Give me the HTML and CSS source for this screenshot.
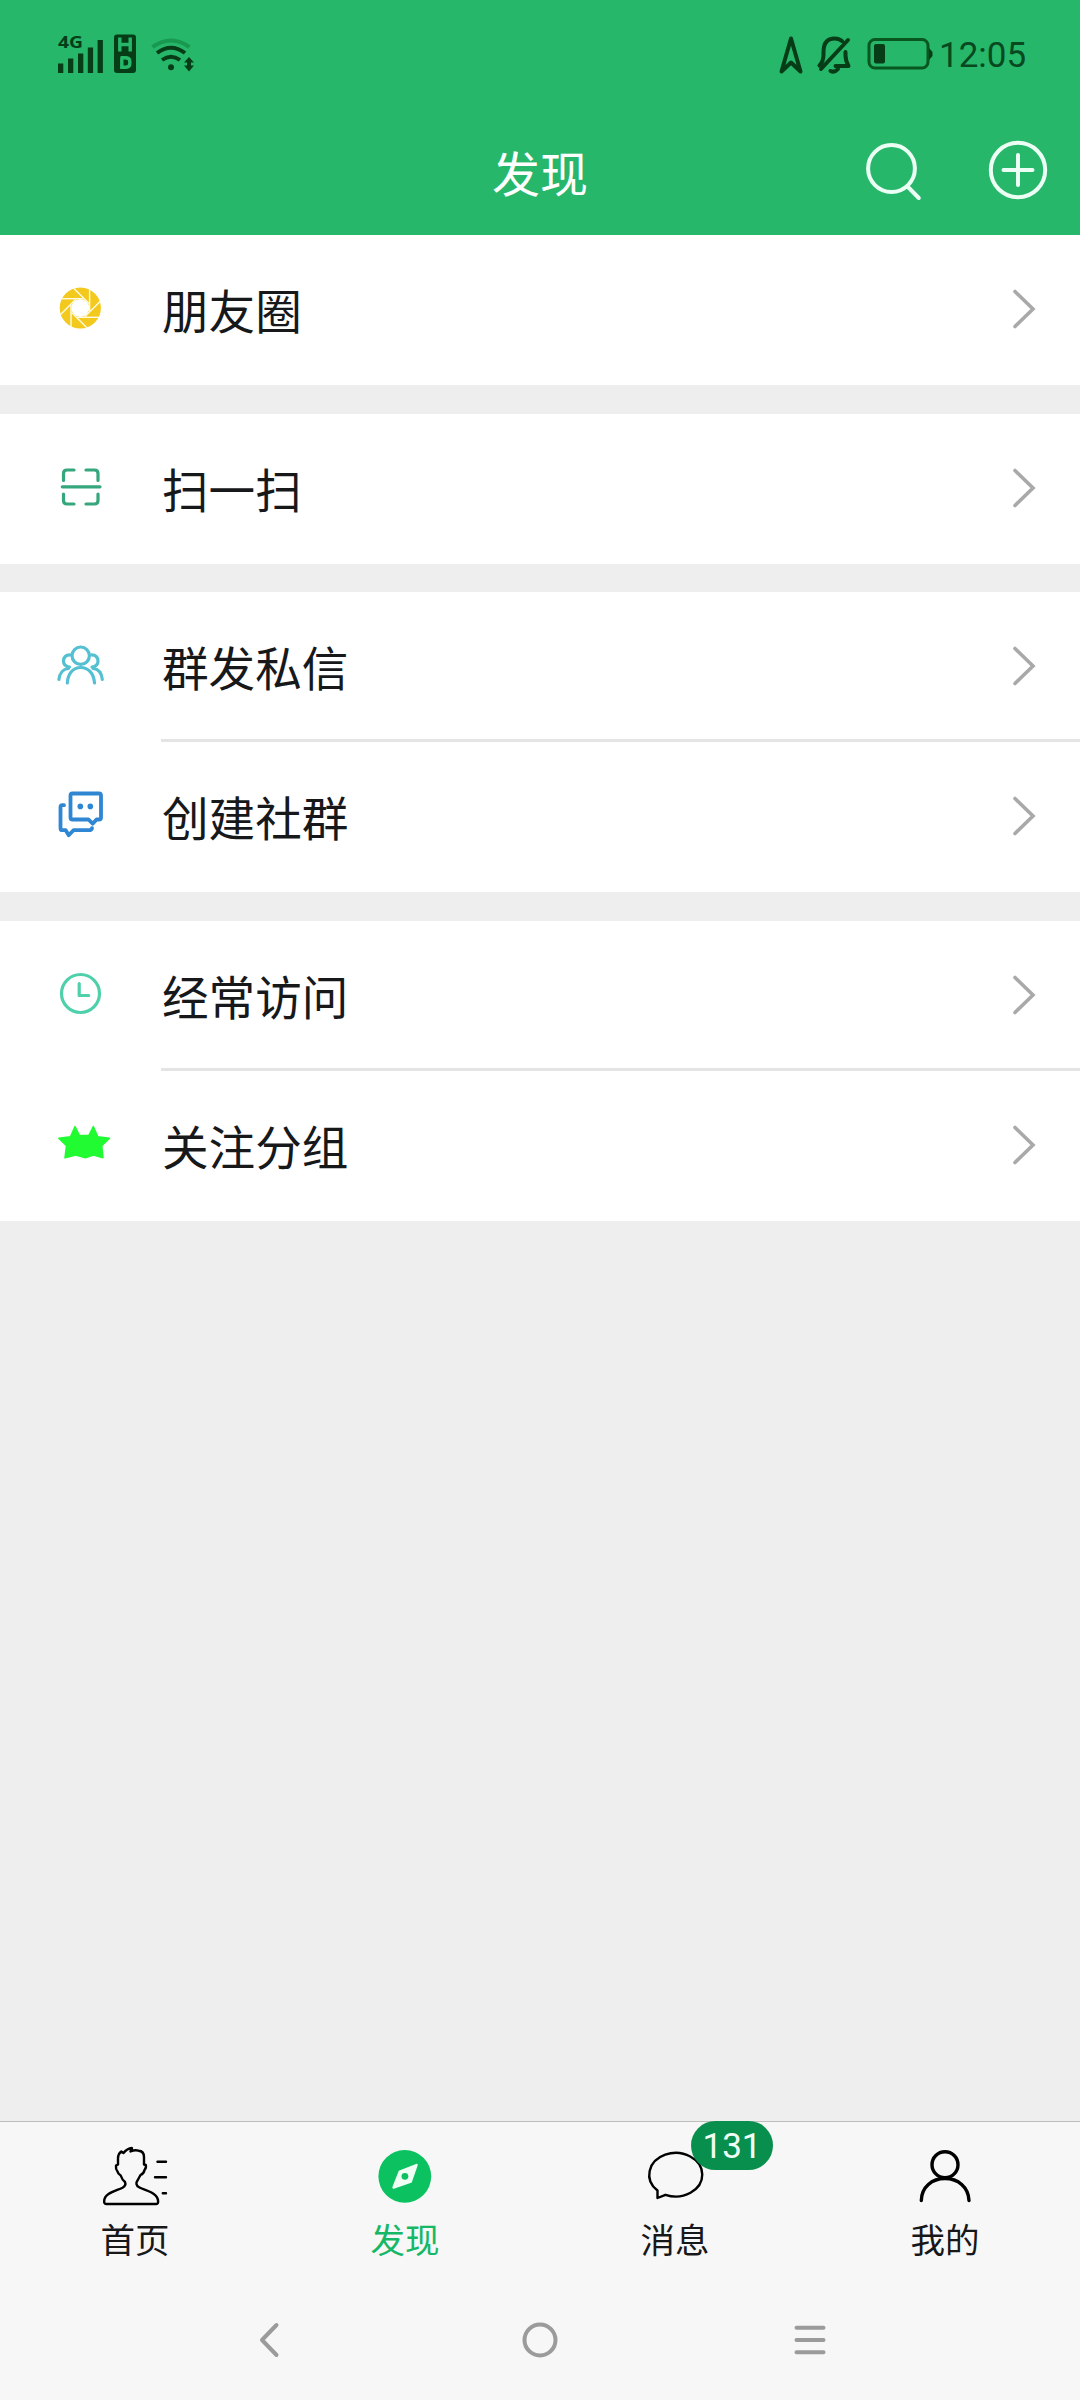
FILE: index.html
```
<!DOCTYPE html>
<html lang="zh-CN">
<head>
<meta charset="utf-8">
<title>发现</title>
<link rel="stylesheet" href="styles.css">
</head>
<body>
<div class="app">
  <header class="header">
    <div class="status">
      <svg class="status-left" width="150" height="50" viewBox="50 30 150 50">
        <text class="net" x="58" y="48" textLength="25" lengthAdjust="spacingAndGlyphs">4G</text>
        <path class="dark" d="M58 63.5h5.3v9.5h-5.3zM68 58.5h5.3v14.5h-5.3zM78 53.5h5.3v19.5h-5.3zM87.8 47.5h5.3v25.5h-5.3zM97.6 40h5.3v33h-5.3z"/>
        <rect class="dark" x="114" y="34.5" width="22" height="38.5" rx="3"/>
        <path class="cut" d="M119.800 37.500v14M130.200 37.500v14M119.800 44.500h10.400M120.500 57.800h4.500q4.800 0 4.800 3.500v2.500q0 3.500-4.800 3.500h-3.200v-9.500"/>
        <path class="wifi faint" d="M152.500 47q18.500-13 37 0"/>
        <path class="wifi" d="M157 53q14-10.500 28 0M162 60q9-6.500 18 0"/>
        <circle class="dark" cx="171" cy="67.300" r="3"/>
        <path class="dark" d="M189 57l5 5.500h-3v3h3l-5 6-5-6h3v-3h-3z"/>
      </svg>
      <svg class="status-icons" width="160" height="50" viewBox="775 30 160 50">
        <path class="line" d="M791 38.500L781.500 71.500l9.500-9 9.500 9z"/>
        <path class="line" d="M821 69l27-29M819.500 65.500q4-4 4-11v-2.500q0-13.500 11-13.500 4.500 0 7.500 2.500M845.500 52v3q0 6 3 11h-13M830.500 71q4 2 7.500-2"/>
        <rect class="line battery" x="869" y="39.500" width="59" height="28.500" rx="6"/>
        <rect class="dark" x="874" y="44" width="11" height="19.500" rx="2"/>
        <path class="dark" d="M929 48l3.500 4v4l-3.500 4z"/>
      </svg>
      <span class="time">12:05</span>
    </div>
    <div class="titlebar">
      <h1 class="title">发现</h1>
      <div class="actions">
        <svg width="64" height="64" viewBox="860 138 64 64"><circle cx="891.500" cy="168.500" r="23.400"/><path d="M908 187l10.800 11"/></svg>
        <svg width="64" height="64" viewBox="986 138 64 64"><circle cx="1018" cy="170" r="27.200"/><path d="M1003.500 170h29M1018 155v30"/></svg>
      </div>
    </div>
  </header>

  <main class="content">
    <section class="group">
      <a class="row">
        <svg class="icon" viewBox="0 0 60 60">
          <circle cx="30.300" cy="29" r="14.800" fill="none" stroke="#f2c91c" stroke-width="11.600"/>
          <g transform="translate(30.300 29)" stroke="#fffbe2" stroke-width="1.400">
            <path id="blade" d="M-19-9.300H3"/>
            <use href="#blade" transform="rotate(45)"/><use href="#blade" transform="rotate(90)"/>
            <use href="#blade" transform="rotate(135)"/><use href="#blade" transform="rotate(180)"/>
            <use href="#blade" transform="rotate(225)"/><use href="#blade" transform="rotate(270)"/>
            <use href="#blade" transform="rotate(315)"/>
          </g>
        </svg>
        <span class="label">朋友圈</span>
        <svg class="chevron" viewBox="0 0 26 44"><path d="M4 4.500L22 22 4 39.500"/></svg>
      </a>
    </section>
    <section class="group">
      <a class="row">
        <svg class="icon stroke scan" viewBox="0 0 60 60"><path d="M12.300 28.800h37.700M13.500 22.500v-7q0-3.500 3.500-3.500h7M36 12h8.500q3.500 0 3.500 3.500v7M48 36v6.500q0 3.500-3.500 3.500h-8.500M24 46h-7q-3.500 0-3.500-3.500v-6.500"/></svg>
        <span class="label">扫一扫</span>
        <svg class="chevron" viewBox="0 0 26 44"><path d="M4 4.500L22 22 4 39.500"/></svg>
      </a>
    </section>
    <section class="group">
      <a class="row">
        <svg class="icon stroke people" viewBox="0 0 60 60"><circle cx="30.700" cy="19.700" r="8.700"/><path d="M17.300 47C17.800 37.500 23 31.500 30.700 31.500S43.800 37.500 44.500 47M20 18.800C15.500 19 13.500 21.500 13.500 25c0 3.500 2.500 5.500 6 6M18.500 32.500C13 33 9.500 37.500 8.900 43.500M41.500 18.800C46 19 48 21.500 48 25c0 3.500-2.500 5.500-6 6M43 32.500c5.500.5 8.700 5 9.300 11"/></svg>
        <span class="label">群发私信</span>
        <svg class="chevron" viewBox="0 0 26 44"><path d="M4 4.500L22 22 4 39.500"/></svg>
      </a>
      <a class="row">
        <svg class="icon stroke chat" viewBox="0 0 60 60"><path d="M22.500 7.500h26.500q2 0 2 2v22q0 2-2 2h-2.500L42.700 37.700l-4.200-4.200h-16q-2 0-2-2v-22q0-2 2-2zM14 19.200h-1.500q-2 0-2 2v21q0 2 2 2h3.200l3 5 4.800-5h15.500q2.500 0 3-2"/><circle class="dot" cx="30.300" cy="20.400" r="2.800"/><circle class="dot" cx="40.300" cy="20.400" r="2.800"/></svg>
        <span class="label">创建社群</span>
        <svg class="chevron" viewBox="0 0 26 44"><path d="M4 4.500L22 22 4 39.500"/></svg>
      </a>
    </section>
    <section class="group">
      <a class="row">
        <svg class="icon stroke clock" viewBox="0 0 60 60"><circle cx="30.500" cy="28.500" r="19"/><path d="M29.200 18.500v12h9.500"/></svg>
        <span class="label">经常访问</span>
        <svg class="chevron" viewBox="0 0 26 44"><path d="M4 4.500L22 22 4 39.500"/></svg>
      </a>
      <a class="row">
        <svg class="icon star" viewBox="0 0 60 60"><path d="M25 11.500l4.500 9h9.300l4.500-9 4.500 10.300 11.700 1.400-7.800 7.500 1.300 12-9.500-2.700-8.200 2.700-9.500-2.700-10.800 2.700 1.500-12-7.700-7.500 11.700-1.400z"/></svg>
        <span class="label">关注分组</span>
        <svg class="chevron" viewBox="0 0 26 44"><path d="M4 4.500L22 22 4 39.500"/></svg>
      </a>
    </section>
  </main>

  <footer class="footer">
    <nav class="tabs">
      <a class="tab">
        <svg class="tab-icon" viewBox="0 0 72 72"><path d="M7 65h50.500q1.800 0 1.600-3C58.500 53.500 47 52 40.500 48.500C36.500 46.500 37 43.500 38.500 41.500L41.500 36Q45 34.500 45.500 31Q47.500 29 46.800 26L45 25.500V18Q45 12 39.500 11.700Q36 10.500 31.500 12.500L33 9Q28 9.500 24.500 14L22.300 12.500Q19.300 14.500 19 19V25.500L17 26.500Q16.500 30 18.500 32.500Q19 35 21.700 36.500Q23 40.500 26 43Q27.500 46.500 23.500 48.700C17 52 5.500 54 5.200 62Q5 65 7 65zM58.500 22.700h8.500M56 38.300h11M63.800 54.300h3.200"/></svg>
        <span class="tab-label">首页</span>
      </a>
      <a class="tab active">
        <svg class="tab-icon" viewBox="0 0 72 72"><circle class="disc" cx="35.800" cy="37.300" r="26.400"/><path class="needle" d="M47.500 26L30.800 32.500 24.500 48.500 41.800 42.500z"/><circle class="disc" cx="35.900" cy="37.300" r="3.400"/></svg>
        <span class="tab-label">发现</span>
      </a>
      <a class="tab">
        <svg class="tab-icon" viewBox="0 0 72 72"><path d="M18.500 51.500V59L26.500 55.800A26.500 21.800 0 1 0 18.500 51.500z"/></svg>
        <span class="badge">131</span>
        <span class="tab-label">消息</span>
      </a>
      <a class="tab">
        <svg class="tab-icon user" viewBox="0 0 72 72"><circle cx="36" cy="25.700" r="13"/><path d="M12.300 61.500C12.500 48 23 39.500 36 39.500S59.500 48 60 61.500"/></svg>
        <span class="tab-label">我的</span>
      </a>
    </nav>
    <div class="system-nav">
      <svg viewBox="0 0 50 50"><path d="M31.500 10L17 25l14.500 15"/></svg>
      <svg viewBox="0 0 50 50"><circle cx="25" cy="25" r="15.500"/></svg>
      <svg viewBox="0 0 50 50"><path d="M11.500 12.700h27M11.500 25h27M11.500 37.200h27"/></svg>
    </div>
  </footer>
</div>
</body>
</html>
```
FILE: styles.css
```
* { box-sizing: border-box; }

body {
  margin: 0;
  background: #eee;
  color: #17181a;
  font-family: "Noto Sans CJK SC", "Noto Sans", sans-serif;
}

svg { display: block; flex: none; }

.app {
  display: flex;
  flex-direction: column;
  width: 1080px;
  height: 2400px;
}

.header {
  height: 235px;
  background: #27b76b;
}

.status {
  display: flex;
  align-items: flex-start;
  height: 105px;
  padding: 30px 54px 0 50px;
}

.status-icons { margin-left: auto; }

.time {
  width: 91px;
  padding-left: 4px;
  color: #08491f;
  font: 35px/52px Roboto, sans-serif;
  white-space: nowrap;
}

.net { font: bold 16px "Open Sans", sans-serif; fill: #063d17; }
.dark { fill: #063d17; }
.cut { fill: none; stroke: #27b76b; stroke-width: 3.4; }
.line, .wifi { fill: none; stroke: #063d17; stroke-width: 4; stroke-linejoin: round; stroke-linecap: round; }
.battery { stroke: #08571f; stroke-width: 3; }
.wifi { stroke-linecap: butt; }
.faint { stroke: #18994f; }

.titlebar {
  display: grid;
  grid-template-columns: 1fr auto 1fr;
  align-items: center;
  height: 130px;
  padding: 0 30px;
}

.title {
  grid-column: 2;
  margin: 0;
  padding-top: 2px;
  color: #fff;
  font-size: 48px;
  font-weight: 400;
  line-height: 72px;
}

.actions {
  display: flex;
  justify-content: flex-end;
  gap: 62px;
}

.actions svg { fill: none; stroke: #ecfff4; stroke-width: 4; stroke-linecap: round; }

.content {
  display: flex;
  flex: 1;
  flex-direction: column;
  gap: 28.500px;
}

.group { background: #fff; }

.row {
  display: flex;
  align-items: center;
  height: 150px;
  padding: 0 43px 2px 50px;
}

.row:not(:last-child) {
  background: linear-gradient(#e4e4e4, #e4e4e4) 161px 147px / 919px 3px no-repeat;
}

.icon { width: 60px; height: 60px; overflow: visible; }
.stroke { fill: none; stroke-width: 3.2; stroke-linecap: round; stroke-linejoin: round; }
.scan { stroke: #36a77c; }
.people { stroke: #54c0d2; }
.chat { stroke: #2f86d2; stroke-width: 3.8; }
.dot { fill: #2f86d2; stroke: none; }
.clock { stroke: #4fd0ab; }
.star { fill: #21fb32; stroke: #21fb32; stroke-width: 1.5; stroke-linejoin: round; }

.label {
  flex: 1;
  padding-left: 52px;
  font-size: 46.600px;
  line-height: 70px;
}

.chevron {
  width: 26px;
  height: 44px;
  fill: none;
  stroke: #a9a9a9;
  stroke-width: 3.6;
  stroke-linecap: round;
}

.footer {
  height: 279px;
  border-top: 1px solid #bdbdbd;
  background: #f7f7f7;
}

.tabs {
  display: grid;
  grid-template-columns: repeat(4, 1fr);
  height: 158px;
}

.tab {
  position: relative;
  display: flex;
  flex-direction: column;
  align-items: center;
  padding-top: 17px;
}

.tab-icon {
  width: 72px;
  height: 72px;
  fill: none;
  stroke: #000;
  stroke-width: 2.4;
  stroke-linecap: round;
  stroke-linejoin: round;
}

.user { stroke-width: 3.4; }
.disc { fill: #0cc160; stroke: none; }
.needle { fill: #effff4; stroke: #effff4; }

.tab-label {
  margin-top: 1px;
  font-size: 34.500px;
  line-height: 52px;
}

.active .tab-label { color: #16b765; }

.badge {
  position: absolute;
  top: -1px;
  left: 151px;
  width: 82px;
  height: 49px;
  border-radius: 25px;
  background: #098f4d;
  color: #f0fff6;
  font: 35px/51px Roboto, sans-serif;
  text-align: center;
}

.system-nav {
  display: grid;
  grid-template-columns: repeat(3, 270px);
  justify-content: center;
  justify-items: center;
  padding-top: 35px;
}

.system-nav svg {
  width: 50px;
  height: 50px;
  fill: none;
  stroke: #9b9b9b;
  stroke-width: 4;
  stroke-linecap: round;
  stroke-linejoin: round;
}
```
